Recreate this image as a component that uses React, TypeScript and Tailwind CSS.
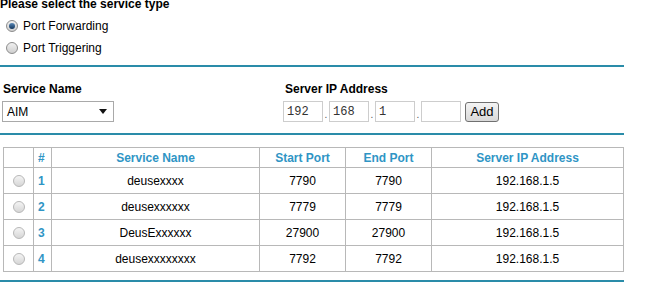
const rows = [
  { n: 1, name: "deusexxxx", start: "7790", end: "7790", ip: "192.168.1.5" },
  { n: 2, name: "deusexxxxxx", start: "7779", end: "7779", ip: "192.168.1.5" },
  { n: 3, name: "DeusExxxxxx", start: "27900", end: "27900", ip: "192.168.1.5" },
  { n: 4, name: "deusexxxxxxxx", start: "7792", end: "7792", ip: "192.168.1.5" },
];

function Radio({ checked = false, light = false }: { checked?: boolean; light?: boolean }) {
  return (
    <span
      className={
        "flex items-center justify-center w-[12px] h-[12px] rounded-full border bg-gradient-to-b " +
        (light
          ? "border-[#b8b8b8] from-[#f4f4f4] to-[#d6d6d6]"
          : "border-[#8c8c8c] from-[#f0f0f0] to-[#cfcfcf]")
      }
    >
      {checked && <span className="w-[6px] h-[6px] rounded-full bg-gradient-to-b from-[#5a8ab8] to-[#12355c]" />}
    </span>
  );
}

function Rule() {
  return <div className="w-[624px] h-[2px] bg-[#2a8ca9]" />;
}

function IpBox({ value }: { value: string }) {
  return (
    <div className="w-[40px] h-[21px] border border-[#cdcdcd] bg-white flex items-center pl-[3px] font-['Liberation_Mono',monospace] text-[12px] text-[#333]">
      {value}
    </div>
  );
}

function Dot() {
  return <span className="w-[6px] h-[21px] flex items-end justify-center pb-[2px] text-[10px] leading-none text-[#555]">.</span>;
}

export default function App() {
  return (
    <div className="w-[648px] h-[293px] overflow-hidden bg-white font-['Liberation_Sans',Arial,sans-serif] text-[12px] text-black">
      <div className="mt-[-3px] h-[14px] leading-[14px] font-bold">Please select the service type</div>

      <div className="h-[22px] flex items-center gap-[5px] pl-[6px] mt-[4px]">
        <Radio checked />
        <span>Port Forwarding</span>
      </div>
      <div className="h-[22px] flex items-center gap-[5px] pl-[6px]">
        <Radio />
        <span>Port Triggering</span>
      </div>

      <div className="mt-[6px]">
        <Rule />
      </div>

      <div className="mt-[15px] flex">
        <div className="w-[283px] pl-[2px]">
          <div className="h-[14px] leading-[14px] font-bold pl-[1px]">Service Name</div>
          <div className="mt-[5px] w-[112px] h-[21px] border border-[#a9a9a9] bg-white flex items-center justify-between pl-[4px] pr-[6px]">
            <span>AIM</span>
            <svg width="8" height="5" viewBox="0 0 8 5">
              <path d="M0 0h8L4 5z" fill="#111" />
            </svg>
          </div>
        </div>
        <div>
          <div className="h-[14px] leading-[14px] font-bold pl-[2px]">Server IP Address</div>
          <div className="mt-[5px] flex items-center">
            <IpBox value="192" />
            <Dot />
            <IpBox value="168" />
            <Dot />
            <IpBox value="1" />
            <Dot />
            <IpBox value="" />
            <button className="ml-[4px] w-[34px] h-[20px] rounded-[3px] border border-[#707070] bg-gradient-to-b from-[#f4f4f4] to-[#d9d9d9] text-[13px] leading-none text-black">
              Add
            </button>
          </div>
        </div>
      </div>

      <div className="mt-[11px]">
        <Rule />
      </div>

      <table className="mt-[12px] ml-[3px] border-collapse border border-[#b8b8b8] table-fixed w-[620px]">
        <colgroup>
          <col className="w-[30px]" />
          <col className="w-[18px]" />
          <col className="w-[208px]" />
          <col className="w-[86px]" />
          <col className="w-[86px]" />
          <col className="w-[192px]" />
        </colgroup>
        <thead>
          <tr className="h-[20px] font-bold text-[#2f95c5]">
            <th className="border border-[#b8b8b8]" />
            <th className="border border-[#b8b8b8] text-left pl-[4px]">#</th>
            <th className="border border-[#b8b8b8]">Service Name</th>
            <th className="border border-[#b8b8b8]">Start Port</th>
            <th className="border border-[#b8b8b8]">End Port</th>
            <th className="border border-[#b8b8b8]">Server IP Address</th>
          </tr>
        </thead>
        <tbody>
          {rows.map((r) => (
            <tr key={r.n} className="h-[26px]">
              <td className="border border-[#b8b8b8]">
                <div className="flex justify-center">
                  <Radio light />
                </div>
              </td>
              <td className="border border-[#b8b8b8] pl-[4px] font-bold text-[#2f95c5]">{r.n}</td>
              <td className="border border-[#b8b8b8] text-center">{r.name}</td>
              <td className="border border-[#b8b8b8] text-center">{r.start}</td>
              <td className="border border-[#b8b8b8] text-center">{r.end}</td>
              <td className="border border-[#b8b8b8] text-center">{r.ip}</td>
            </tr>
          ))}
        </tbody>
      </table>

      <div className="mt-[8px]">
        <Rule />
      </div>
    </div>
  );
}
